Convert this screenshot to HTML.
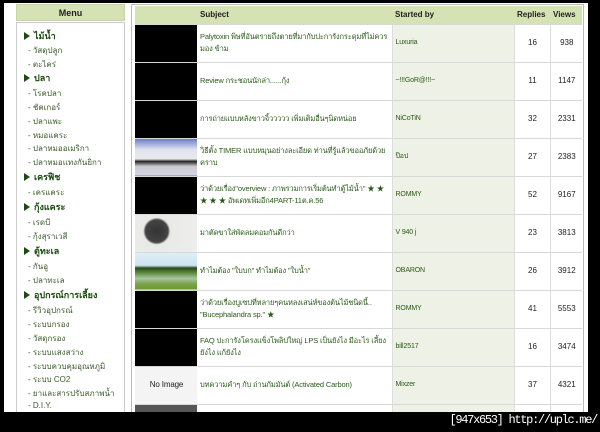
<!DOCTYPE html>
<html><head><meta charset="utf-8"><style>
*{margin:0;padding:0;box-sizing:border-box}
body{width:600px;height:432px;background:#000;position:relative;overflow:hidden;font-family:"Liberation Sans","Noto Sans CJK SC",sans-serif}
#page{position:absolute;left:4px;top:3px;width:584px;height:409px;background:#fff;overflow:hidden}
#mh{position:absolute;left:12px;top:1px;width:109px;height:17px;background:#d5e2b3;border:1px solid #c8d3a8;font-size:9px;font-weight:bold;text-align:center;line-height:16px;color:#222}
#mb{position:absolute;left:12px;top:19px;width:109px;height:400px;border:1px solid #ccc;font-size:8px;color:#244a16}
#mb div{position:absolute;left:7px;white-space:nowrap}
#mb .c{font-weight:bold;font-size:9px;color:#1d4a10}
#mb .c:before{content:"";display:inline-block;width:0;height:0;border-left:6px solid #1d4a10;border-top:4px solid transparent;border-bottom:4px solid transparent;margin-right:4px;vertical-align:-1px}
#mb .s{left:11px;color:#3a5a2a}
#tb{position:absolute;left:127px;top:1px;width:453px;height:420px;border:1px solid #bbb}
table{border-collapse:collapse;position:absolute;left:3px;top:1px;width:447px;font-size:7.5px;color:#2a5a18;table-layout:fixed}
th{background:#d5e2b3;height:18px;font-size:8px;text-align:left;color:#222;padding-left:3px}
td{border-top:1px solid #d8d8d8;height:38px;vertical-align:middle;padding:0 2px 0 3px;line-height:12px;letter-spacing:-0.15px}
td.i{background:#000;padding:0}
td.a{background:#eef1e5;font-size:7px;border-left:1px solid #ddd}
td.r,td.v{text-align:center;color:#222;font-size:8px;border-left:1px solid #ddd;letter-spacing:0}
#foot{position:absolute;right:3px;top:413px;color:#fff;font-family:"Liberation Mono",monospace;font-size:12px;letter-spacing:-1.3px}
</style></head><body>
<div id="page">
<div id="mh">Menu</div>
<div id="mb">
<div class="c" style="top:6px">ไม้น้ำ</div>
<div class="s" style="top:21px">- วัสดุปลูก</div>
<div class="s" style="top:35px">- ตะไคร่</div>
<div class="c" style="top:48px">ปลา</div>
<div class="s" style="top:64px">- โรคปลา</div>
<div class="s" style="top:78px">- ชัคเกอร์</div>
<div class="s" style="top:92px">- ปลาแพะ</div>
<div class="s" style="top:106px">- หมอแคระ</div>
<div class="s" style="top:119px">- ปลาหมออเมริกา</div>
<div class="s" style="top:133px">- ปลาหมอแทงกันยิกา</div>
<div class="c" style="top:147px">เครฟิช</div>
<div class="s" style="top:163px">- เครแคระ</div>
<div class="c" style="top:177px">กุ้งแคระ</div>
<div class="s" style="top:193px">- เรดบี</div>
<div class="s" style="top:207px">- กุ้งสุราเวสี</div>
<div class="c" style="top:221px">ตู้ทะเล</div>
<div class="s" style="top:237px">- กันอู</div>
<div class="s" style="top:251px">- ปลาทะเล</div>
<div class="c" style="top:265px">อุปกรณ์การเลี้ยง</div>
<div class="s" style="top:281px">- รีวิวอุปกรณ์</div>
<div class="s" style="top:295px">- ระบบกรอง</div>
<div class="s" style="top:309px">- วัสดุกรอง</div>
<div class="s" style="top:323px">- ระบบแสงสว่าง</div>
<div class="s" style="top:337px">- ระบบควบคุมอุณหภูมิ</div>
<div class="s" style="top:350px">- ระบบ CO2</div>
<div class="s" style="top:364px">- ยาและสารปรับสภาพน้ำ</div>
<div class="s" style="top:378px">- D.I.Y.</div>
</div>
<div id="tb">
<table>
<tr><th style="width:62px"></th><th>Subject</th><th style="width:122px">Started by</th><th style="width:36px">Replies</th><th style="width:32px">Views</th></tr>
<tr><td class="i"></td><td>Palytoxin พิษที่อันตรายถึงตายที่มากับปะการังกระดุมที่ไม่ควรมอง ข้าม</td><td class="a">Luxuria</td><td class="r">16</td><td class="v">938</td></tr>
<tr><td class="i"></td><td>Review กระชอนนักล่า......กุ้ง</td><td class="a">~!!!GoR@!!!~</td><td class="r">11</td><td class="v">1147</td></tr>
<tr><td class="i"></td><td>การถ่ายแบบหลังขาวจิ้ววววว เพิ่มเติมอื่นๆนิดหน่อย</td><td class="a">NiCoTiN</td><td class="r">32</td><td class="v">2331</td></tr>
<tr><td class="i" style="background:linear-gradient(#6a78c8 0,#dfe3ef 30%,#e9e9ea 55%,#222 62%,#c9c9d2 75%,#d6d7e0)"></td><td>วิธีตั้ง TIMER แบบหมุนอย่างละเอียด ท่านที่รู้แล้วขออภัยด้วยคราบ</td><td class="a">ป๊อป</td><td class="r">27</td><td class="v">2383</td></tr>
<tr><td class="i"></td><td>ว่าด้วยเรื่อง"overview : ภาพรวมการเริ่มต้นทำตู้ไม้น้ำ" ★ ★ ★ ★ ★ อัพเดทเพิ่มอีก4PART-11ต.ค.56</td><td class="a">ROMMY</td><td class="r">52</td><td class="v">9167</td></tr>
<tr><td class="i" style="background:radial-gradient(circle at 35% 45%,#333 0,#444 25%,#e9e9e6 30%,#eee 100%)"></td><td>มาตัดขาใส่พัดลมคอมกันดีกว่า</td><td class="a">V 940 j</td><td class="r">23</td><td class="v">3813</td></tr>
<tr><td class="i" style="background:linear-gradient(#dfeef8 0,#cfe4f2 35%,#2a4a1a 42%,#5d8a3c 55%,#a7c6a0 70%,#7ca24a 85%,#6b9a2e)"></td><td>ทำไมต้อง "ใบบก" ทำไมต้อง "ใบน้ำ"</td><td class="a">OBARON</td><td class="r">26</td><td class="v">3912</td></tr>
<tr><td class="i"></td><td>ว่าด้วยเรื่องบูเซปที่หลายๆคนหลงเสน่ห์ของต้นไม้ชนิดนี้.. "Bucephalandra sp." ★</td><td class="a">ROMMY</td><td class="r">41</td><td class="v">5553</td></tr>
<tr><td class="i"></td><td>FAQ ปะการังโครงแข็งโพลิปใหญ่ LPS เป็นยังไง มีอะไร เลี้ยงยังไง แก้ยังไง</td><td class="a">bill2517</td><td class="r">16</td><td class="v">3474</td></tr>
<tr><td style="background:#f4f4f4;color:#222;text-align:center;font-size:8px">No Image</td><td>บทความคำๆ กับ ถ่านกัมมันต์ (Activated Carbon)</td><td class="a">Mixzer</td><td class="r">37</td><td class="v">4321</td></tr>
<tr><td class="i" style="background:#555"></td><td></td><td class="a"></td><td class="r"></td><td class="v"></td></tr>
</table>
</div>
</div>
<div id="foot">[947x653] http://uplc.me/</div>
</body></html>
